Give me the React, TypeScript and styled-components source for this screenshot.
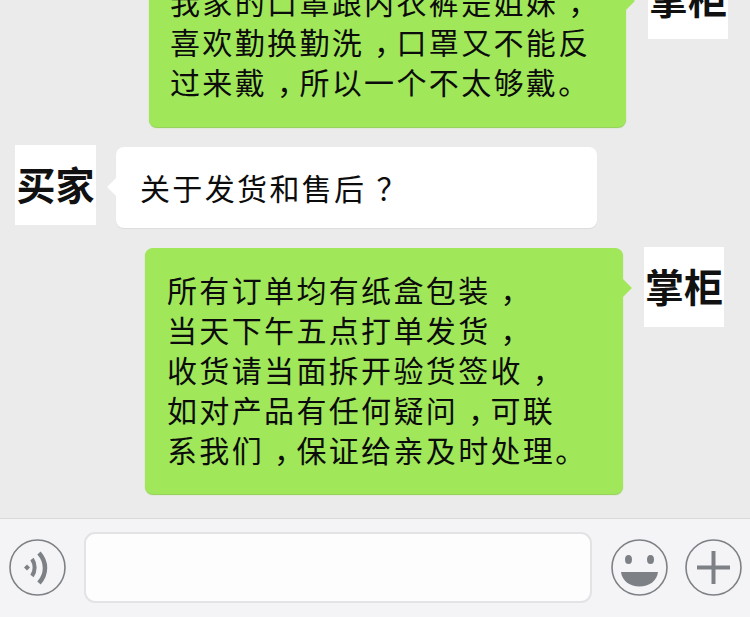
import styled, { createGlobalStyle } from 'styled-components';

const GlobalStyle = createGlobalStyle`
  html, body {
    margin: 0;
    padding: 0;
    height: 100%;
    overflow: hidden;
  }

  #root {
    height: 100%;
  }
`;

/* ---- page ---- */

const Page = styled.div`
  display: flex;
  flex-direction: column;
  height: 100vh;
  background: #ebebeb;
  font-family: 'Noto Sans CJK SC', 'Noto Sans', sans-serif;
`;

const Messages = styled.div`
  flex: 1;
  min-height: 0;
  display: flex;
  flex-direction: column;
  justify-content: flex-end;
  overflow: hidden;
  padding-bottom: 24px;
`;

/* ---- chat rows ---- */

const Row = styled.div<{ $side: 'left' | 'right'; $inset: number; $gap: number; $after: number }>`
  flex: none;
  display: flex;
  align-items: flex-start;
  justify-content: ${({ $side }) => ($side === 'left' ? 'flex-start' : 'flex-end')};
  gap: ${({ $gap }) => $gap}px;
  padding: 0 ${({ $side, $inset }) => ($side === 'right' ? $inset : 0)}px 0
    ${({ $side, $inset }) => ($side === 'left' ? $inset : 0)}px;
  margin-bottom: ${({ $after }) => $after}px;
`;

const Avatar = styled.div<{ $buyer?: boolean }>`
  flex: none;
  box-sizing: border-box;
  width: ${({ $buyer }) => ($buyer ? 81 : 80)}px;
  height: 80px;
  padding-bottom: 4px;
  display: flex;
  align-items: center;
  justify-content: center;
  background: #fff;
  color: #111;
  font-size: 39px;
  font-weight: 700;
  line-height: 1;
  white-space: nowrap;
`;

const Bubble = styled.div<{
  $side: 'left' | 'right';
  $width: number;
  $nudge: number;
  $padLeft: number;
  $padY: [number, number];
}>`
  position: relative;
  flex: none;
  box-sizing: border-box;
  width: ${({ $width }) => $width}px;
  margin-top: ${({ $nudge }) => $nudge}px;
  padding: ${({ $padY }) => $padY[0]}px 0 ${({ $padY }) => $padY[1]}px ${({ $padLeft }) => $padLeft}px;
  border-radius: 8px;
  background: ${({ $side }) => ($side === 'left' ? '#fff' : '#a0e75a')};
  box-shadow: 0 1px 1px ${({ $side }) => ($side === 'left' ? '#dcdcdc' : '#8fd04f')};
  color: #0c0c0c;
  font-size: 30px;
  letter-spacing: 2.35px;
  font-weight: 400;
  line-height: 40px;
  white-space: nowrap;

  &::after {
    content: '';
    position: absolute;
    top: 33px;
    ${({ $side }) => ($side === 'left' ? 'left: -6px;' : 'right: -6px;')}
    width: 14px;
    height: 14px;
    background: inherit;
    transform: rotate(45deg);
  }
`;

const Line = styled.div``;

/* punctuation sits centred in its cell in the picture */
const Mark = styled.span`
  display: inline-block;
  font-feature-settings: 'halt';
  padding: 0 5px 0 10px;
`;

/* ---- input bar ---- */

const InputBar = styled.div`
  flex: none;
  height: 99px;
  box-sizing: border-box;
  display: flex;
  align-items: center;
  padding: 0 8px 1px 9px;
  background: #f4f4f6;
  border-top: 1px solid #d9d9d9;
`;

const RoundButton = styled.button<{ $after?: number }>`
  flex: none;
  width: 57px;
  height: 57px;
  padding: 0;
  margin-right: ${({ $after }) => $after ?? 0}px;
  background: none;
  border: none;
  color: #7d8085;
`;

const Icon = styled.svg`
  display: block;
  width: 57px;
  height: 57px;
`;

const TextBox = styled.div`
  flex: none;
  width: 508px;
  height: 71px;
  box-sizing: border-box;
  margin-right: 19px;
  background: #fdfdfd;
  border: 2px solid #e3e3e5;
  border-radius: 11px;
`;

const VoiceIcon = () => (
  <Icon viewBox="0 0 57 57" fill="none" stroke="currentColor">
    <circle cx="28.5" cy="28.5" r="27.5" strokeWidth="1.6" />
    <path d="M18 25.500l3 3-3 3-3-3z" fill="currentColor" stroke="none" />
    <path d="M23 20c3.500 5 3.500 12 0 17" strokeWidth="4" />
    <path d="M30 14c8 9 8 21 0 30" strokeWidth="4.500" />
  </Icon>
);

const SmileIcon = () => (
  <Icon viewBox="0 0 57 57" fill="none" stroke="currentColor">
    <circle cx="28.5" cy="28.5" r="27.5" strokeWidth="1.6" />
    <ellipse cx="17.500" cy="20.500" rx="3.500" ry="4.500" fill="currentColor" stroke="none" />
    <ellipse cx="39.500" cy="20.500" rx="3.500" ry="4.500" fill="currentColor" stroke="none" />
    <path d="M10 33h37c-1 9-9 14.500-18.500 14.500S11 42 10 33z" fill="currentColor" stroke="none" />
  </Icon>
);

const PlusIcon = () => (
  <Icon viewBox="0 0 57 57" fill="none" stroke="currentColor">
    <circle cx="28.5" cy="28.5" r="27.5" strokeWidth="1.6" />
    <path d="M12 28.500h33M28.500 12v33" strokeWidth="4" />
  </Icon>
);

const App = () => (
  <Page>
    <GlobalStyle />
    <Messages>
      <Row $side="right" $inset={22} $gap={22} $after={18}>
        <Bubble $side="right" $width={477} $nudge={2} $padLeft={21} $padY={[20, 26]}>
          <Line>我家的口罩跟内衣裤是姐妹<Mark>，</Mark></Line>
          <Line>喜欢勤换勤洗<Mark>，</Mark>口罩又不能反</Line>
          <Line>过来戴<Mark>，</Mark>所以一个不太够戴。</Line>
        </Bubble>
        <Avatar>掌柜</Avatar>
      </Row>
      <Row $side="left" $inset={15} $gap={20} $after={19}>
        <Avatar $buyer>买家</Avatar>
        <Bubble $side="left" $width={481} $nudge={2} $padLeft={24} $padY={[20, 21]}>
          <Line>关于发货和售后<Mark>？</Mark></Line>
        </Bubble>
      </Row>
      <Row $side="right" $inset={26} $gap={21} $after={0}>
        <Bubble $side="right" $width={478} $nudge={1} $padLeft={22} $padY={[21, 25]}>
          <Line>所有订单均有纸盒包装<Mark>，</Mark></Line>
          <Line>当天下午五点打单发货<Mark>，</Mark></Line>
          <Line>收货请当面拆开验货签收<Mark>，</Mark></Line>
          <Line>如对产品有任何疑问<Mark>，</Mark>可联</Line>
          <Line>系我们<Mark>，</Mark>保证给亲及时处理。</Line>
        </Bubble>
        <Avatar>掌柜</Avatar>
      </Row>
    </Messages>
    <InputBar>
      <RoundButton $after={18} aria-label="voice">
        <VoiceIcon />
      </RoundButton>
      <TextBox />
      <RoundButton $after={17} aria-label="emoji">
        <SmileIcon />
      </RoundButton>
      <RoundButton aria-label="more">
        <PlusIcon />
      </RoundButton>
    </InputBar>
  </Page>
);

export default App;
